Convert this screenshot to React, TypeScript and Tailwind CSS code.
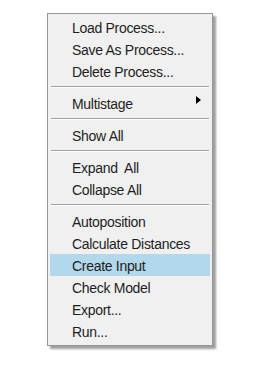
type Entry = { label?: string; sep?: boolean; sub?: boolean; active?: boolean }

const entries: Entry[] = [
  { label: 'Load Process...' },
  { label: 'Save As Process...' },
  { label: 'Delete Process...' },
  { sep: true },
  { label: 'Multistage', sub: true },
  { sep: true },
  { label: 'Show All' },
  { sep: true },
  { label: 'Expand\u00a0 All' },
  { label: 'Collapse All' },
  { sep: true },
  { label: 'Autoposition' },
  { label: 'Calculate Distances' },
  { label: 'Create Input', active: true },
  { label: 'Check Model' },
  { label: 'Export...' },
  { label: 'Run...' },
]

export default function App() {
  return (
    <div className="w-[275px] h-[383px] bg-white pl-[47px] pt-[13px]"
      style={{ fontFamily: '"Liberation Sans", Arial, sans-serif' }}>
      <div className="w-[166px] bg-[#f0f0f0] border border-[#979797] pt-[2px] pb-[3px] shadow-[3px_3px_2px_rgba(0,0,0,0.38)]">
        {entries.map((e, i) =>
          e.sep ? (
            <div key={i} className="h-[10px] flex flex-col justify-center px-[3px]">
              <div className="h-px bg-[#a0a0a0]" />
              <div className="h-px bg-white" />
            </div>
          ) : (
            <div key={i}
              className={
                'relative mx-[2px] h-[22px] flex items-center pt-[2px] pl-[22px] text-[14px] tracking-[-0.3px] text-[#1e1e1e] ' +
                (e.active ? 'bg-[#b3d7eb]' : '')
              }>
              {e.label}
              {e.sub && (
                <svg className="absolute left-[146px] top-[4px]" width="5" height="8" viewBox="0 0 5 8">
                  <polygon points="0,0 5,4 0,8" fill="#000" />
                </svg>
              )}
            </div>
          )
        )}
      </div>
    </div>
  )
}
